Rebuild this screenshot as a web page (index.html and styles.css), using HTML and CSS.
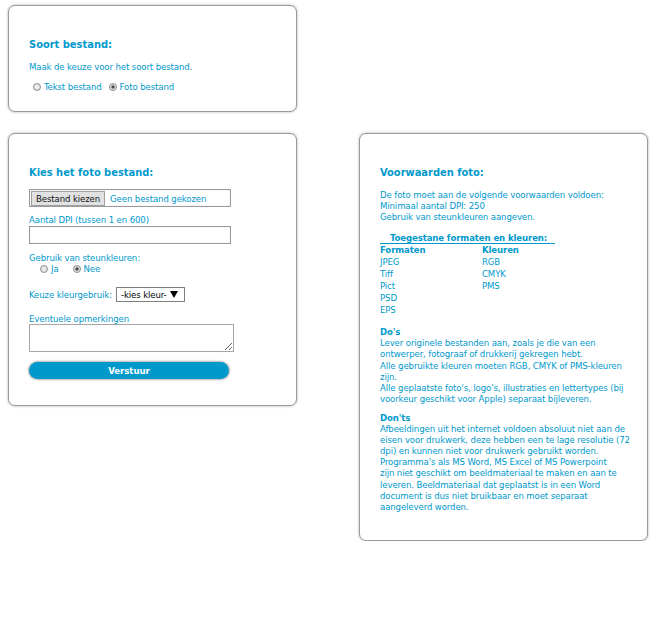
FILE: index.html
```html
<!DOCTYPE html>
<html lang="nl">
<head>
<meta charset="utf-8">
<title>Bestand uploaden</title>
<link rel="stylesheet" href="styles.css">
</head>
<body>
<div class="page">
  <section class="box box-type">
    <h3 class="title">Soort bestand:</h3>
    <p class="text">Maak de keuze voor het soort bestand.</p>
    <div class="radios radios-type">
      <label class="opt"><input type="radio" name="soort" class="radio"><span>Tekst bestand</span></label>
      <label class="opt"><input type="radio" name="soort" class="radio" checked><span>Foto bestand</span></label>
    </div>
  </section>

  <section class="box box-form">
    <h3 class="title">Kies het foto bestand:</h3>
    <div class="file">
      <span class="file-btn">Bestand kiezen</span>
      <span class="file-name">Geen bestand gekozen</span>
    </div>
    <label class="lbl lbl-dpi">Aantal DPI (tussen 1 en 600)</label>
    <input type="text" class="field">
    <label class="lbl lbl-steun">Gebruik van steunkleuren:</label>
    <div class="radios radios-steun">
      <label class="opt"><input type="radio" name="steun" class="radio"><span>Ja</span></label>
      <label class="opt"><input type="radio" name="steun" class="radio" checked><span>Nee</span></label>
    </div>
    <div class="kleur-row">
      <span class="lbl">Keuze kleurgebruik:</span>
      <div class="select"><span>-kies kleur-</span><svg class="arrow" width="8" height="7" viewBox="0 0 8 7"><polygon points="0,0 8,0 4,7" fill="#000"/></svg></div>
    </div>
    <label class="lbl lbl-opm">Eventuele opmerkingen</label>
    <textarea class="area"></textarea>
    <button class="submit" type="button">Verstuur</button>
  </section>

  <section class="box box-info">
    <h3 class="title">Voorwaarden foto:</h3>
    <p class="text">De foto moet aan de volgende voorwaarden voldoen:<br>Minimaal aantal DPI: 250<br>Gebruik van steunkleuren aangeven.</p>
    <div class="caption"><span>Toegestane formaten en kleuren:</span></div>
    <table class="formats">
      <tr><th>Formaten</th><th>Kleuren</th></tr>
      <tr><td>JPEG</td><td>RGB</td></tr>
      <tr><td>Tiff</td><td>CMYK</td></tr>
      <tr><td>Pict</td><td>PMS</td></tr>
      <tr><td>PSD</td><td></td></tr>
      <tr><td>EPS</td><td></td></tr>
    </table>
    <div class="block dos">
      <h4 class="sub">Do's</h4>
      <p class="text">Lever originele bestanden aan, zoals je die van een ontwerper, fotograaf of drukkerij gekregen hebt.<br>Alle gebruikte kleuren moeten RGB, CMYK of PMS-kleuren zijn.<br>Alle geplaatste foto's, logo's, illustraties en lettertypes (bij voorkeur geschikt voor Apple) separaat bijleveren.</p>
    </div>
    <div class="block donts">
      <h4 class="sub">Don'ts</h4>
      <p class="text lines">Afbeeldingen uit het internet voldoen absoluut niet aan de<br>eisen voor drukwerk, deze hebben een te lage resolutie (72<br>dpi) en kunnen niet voor drukwerk gebruikt worden.<br>Programma's als MS Word, MS Excel of MS Powerpoint<br>zijn niet geschikt om beeldmateriaal te maken en aan te<br>leveren. Beeldmateriaal dat geplaatst is in een Word<br>document is dus niet bruikbaar en moet separaat<br>aangeleverd worden.</p>
    </div>
  </section>
</div>
</body>
</html>
```
FILE: styles.css
```css
* { box-sizing: border-box; }
body {
  margin: 0;
  background: #fff;
  color: #0099cc;
  font-family: "DejaVu Sans Condensed", "DejaVu Sans", sans-serif;
  font-size: 9.5px;
  letter-spacing: -0.1px;
  line-height: 11px;
}
.page {
  display: grid;
  grid-template-columns: 289px 289px;
  column-gap: 62px;
  row-gap: 21px;
  align-items: start;
  padding: 5px 0 0 8px;
}
.box {
  border: 1px solid #9a9a9a;
  border-radius: 7px;
  box-shadow: 0 0 3px rgba(0,0,0,0.3);
  padding: 32px 20px 18px 20px;
  background: #fff;
}
.box-type { grid-column: 1; grid-row: 1; }
.box-form { grid-column: 1; grid-row: 2; padding-bottom: 26px; }
.box-info { grid-column: 2; grid-row: 2; padding-bottom: 28px; }

.title {
  margin: 0 0 10px 0;
  font-size: 11px;
  line-height: 13px;
  font-weight: bold;
  letter-spacing: 0;
}
.text { margin: 0; }
.lines { white-space: nowrap; }
.box-type .text { margin-bottom: 8px; }

.radios { display: flex; align-items: center; height: 13px; }
.radios-type { padding-left: 4px; gap: 7px; }
.radios-steun { padding-left: 11px; gap: 14px; height: 11px; }
.opt { display: flex; align-items: center; gap: 1px; }
.radio {
  appearance: none;
  -webkit-appearance: none;
  width: 8px;
  height: 8px;
  margin: 0 2px 0 0;
  border: 1px solid #8f8f8f;
  border-radius: 50%;
  background: radial-gradient(circle, #f2f2f2 0, #d9d9d9 100%);
}
.radio:checked {
  background: radial-gradient(circle, #444 0, #555 1.3px, #dcdcdc 2px, #e6e6e6 100%);
}

.file {
  margin-top: 0;
  width: 202px;
  height: 18px;
  border: 1px solid #9a9a9a;
  box-shadow: inset 0 0 1px rgba(0,0,0,0.25);
  display: flex;
  align-items: center;
  padding-left: 1px;
}
.file-btn {
  height: 15px;
  padding: 0 4px;
  background: #e1e1e1;
  border: 1px solid #a0a0a0;
  color: #111;
  line-height: 13px;
}
.file-name { margin-left: 5px; }

.lbl { display: block; }
.lbl-dpi { margin-top: 7px; }
.field {
  display: block;
  margin: 1px 0 0 0;
  width: 202px;
  height: 18px;
  border: 1px solid #9a9a9a;
  box-shadow: inset 0 0 1px rgba(0,0,0,0.25);
  padding: 0 3px;
  font: inherit;
}
.lbl-steun { margin-top: 8px; }

.kleur-row {
  display: flex;
  align-items: center;
  gap: 4px;
  margin-top: 13px;
}
.select {
  width: 69px;
  height: 15px;
  border: 1px solid #7f7f7f;
  display: flex;
  align-items: center;
  justify-content: space-between;
  padding: 0 6px 0 4px;
  color: #000;
}
.arrow { display: block; }

.lbl-opm { margin-top: 11px; }
.area {
  display: block;
  width: 205px;
  height: 28px;
  margin: 0;
  border: 1px solid #a6a6a6;
  font: inherit;
  resize: both;
}
.submit {
  display: block;
  margin-top: 10px;
  width: 200px;
  height: 17px;
  border: 0;
  border-radius: 9px;
  background: #0099cc;
  box-shadow: 0 0 2px 1px rgba(0,0,0,0.3);
  color: #fff;
  font: bold 9.5px "DejaVu Sans Condensed", "DejaVu Sans", sans-serif;
  padding: 0;
}

.box-info .text { line-height: 11.1px; }
.caption { margin-top: 10px; }
.caption span {
  display: inline-block;
  font-weight: bold;
  line-height: 11px;
  padding: 0 8px 0 10px;
  border-bottom: 1px solid #0099cc;
}
.formats {
  border-collapse: collapse;
  margin: 0;
}
.formats th, .formats td {
  padding: 0;
  height: 12px;
  line-height: 12px;
  text-align: left;
  vertical-align: middle;
}
.formats th { font-weight: bold; }
.formats th:first-child, .formats td:first-child { width: 102px; }
.block { margin-top: 10px; }
.donts { margin-top: 8px; }
.sub {
  margin: 0;
  font-size: 9.5px;
  line-height: 11.1px;
  font-weight: bold;
}
```
